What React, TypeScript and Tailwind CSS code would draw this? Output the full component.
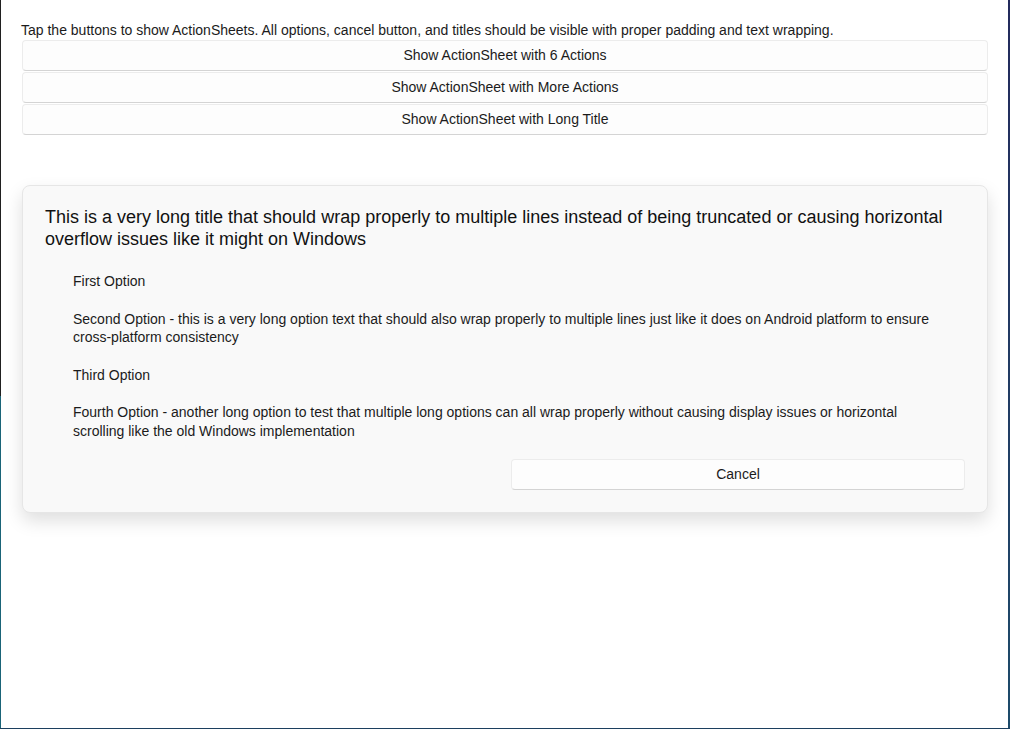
const buttons = [
  "Show ActionSheet with 6 Actions",
  "Show ActionSheet with More Actions",
  "Show ActionSheet with Long Title",
];

const options = [
  "First Option",
  "Second Option - this is a very long option text that should also wrap properly to multiple lines just like it does on Android platform to ensure cross-platform consistency",
  "Third Option",
  "Fourth Option - another long option to test that multiple long options can all wrap properly without causing display issues or horizontal scrolling like the old Windows implementation",
];

export default function App() {
  return (
    <div
      className="flex h-[729px] w-full flex-col bg-white text-[#1b1b1b]"
      style={{ fontFamily: '"Liberation Sans", Arial, sans-serif' }}
    >
      <div className="flex min-h-0 flex-1">
        {/* window frame, left edge */}
        <div className="flex w-px flex-col">
          <div className="h-[396px] bg-[#202020]" />
          <div className="flex-1 bg-[#1a6478]" />
        </div>

        <main className="flex-1 pl-[21px] pr-[20px] pt-[21px]">
          <p className="-ml-px text-[14px] leading-[19px]">
            Tap the buttons to show ActionSheets. All options, cancel button, and titles should be visible with proper
            padding and text wrapping.
          </p>

          <div className="flex flex-col gap-px">
            {buttons.map((label) => (
              <button
                key={label}
                className="h-[31px] w-full rounded-[4px] border border-[#ececec] border-b-[#d4d4d4] bg-[#fdfdfd] text-[14px] text-[#1b1b1b]"
              >
                {label}
              </button>
            ))}
          </div>

          {/* Action sheet */}
          <div className="mt-[50px] rounded-[8px] border border-[#e6e6e6] bg-[#f9f9f9] px-[22px] pb-[22px] pt-[20px] shadow-[0_8px_18px_rgba(0,0,0,0.13)]">
            <h2 className="text-[18px] leading-[22px] text-[#111]">
              This is a very long title that should wrap properly to multiple lines instead of being truncated or
              causing horizontal overflow issues like it might on Windows
            </h2>

            <div className="mt-[22px] flex flex-col gap-[19px] pl-[28px] pr-[20px]">
              {options.map((o) => (
                <p key={o} className="text-[14px] leading-[18.5px]">
                  {o}
                </p>
              ))}
            </div>

            <div className="mt-[19px] flex justify-end">
              <button className="h-[31px] w-[454px] rounded-[4px] border border-[#ececec] border-b-[#d4d4d4] bg-[#fdfdfd] text-[14px] text-[#1b1b1b]">
                Cancel
              </button>
            </div>
          </div>
        </main>

        {/* window frame, right edge */}
        <div className="w-[2px] bg-gradient-to-b from-[#232a5c] to-[#1d4b6a]" />
      </div>
      <div className="h-px bg-[#1c3f5e]" />
    </div>
  );
}
